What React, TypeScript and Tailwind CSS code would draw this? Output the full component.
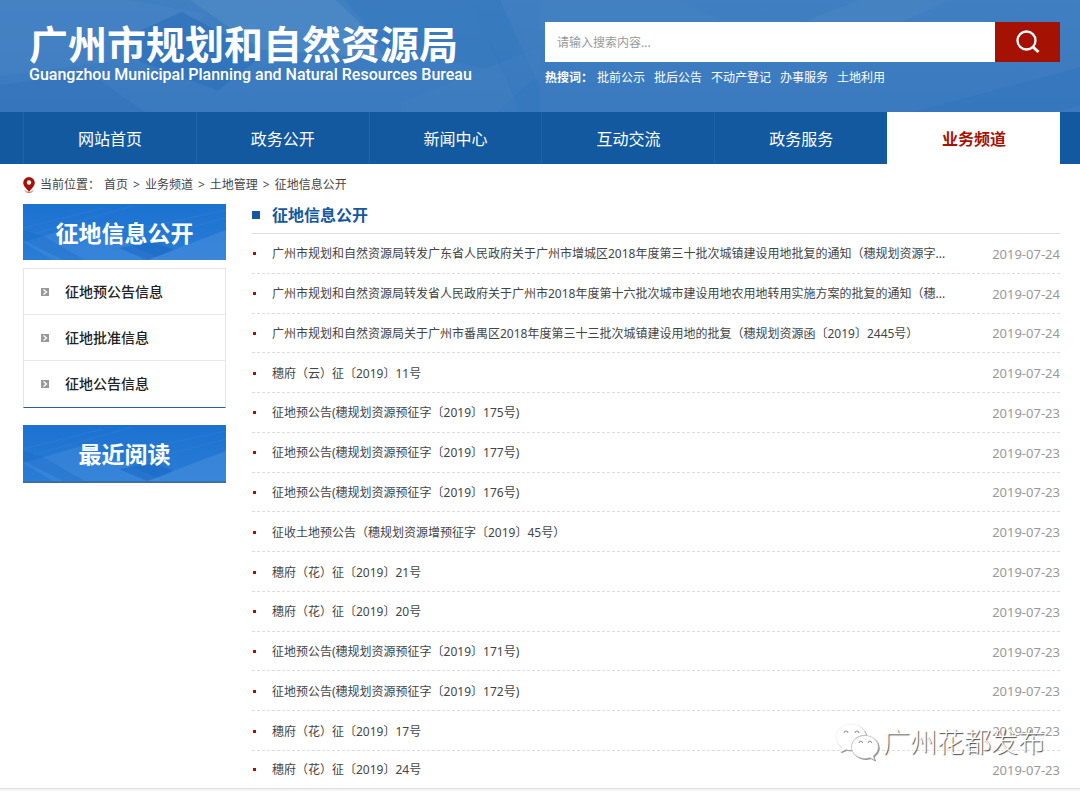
const navItems = ["网站首页", "政务公开", "新闻中心", "互动交流", "政务服务", "业务频道"]

const hotWords = ["批前公示", "批后公告", "不动产登记", "办事服务", "土地利用"]

const crumbs = ["首页", "业务频道", "土地管理", "征地信息公开"]

const menuItems = ["征地预公告信息", "征地批准信息", "征地公告信息"]

const articles = [
    { title: "广州市规划和自然资源局转发广东省人民政府关于广州市增城区2018年度第三十批次城镇建设用地批复的通知（穗规划资源字...", date: "2019-07-24" },
    { title: "广州市规划和自然资源局转发省人民政府关于广州市2018年度第十六批次城市建设用地农用地转用实施方案的批复的通知（穗...", date: "2019-07-24" },
    { title: "广州市规划和自然资源局关于广州市番禺区2018年度第三十三批次城镇建设用地的批复（穗规划资源函〔2019〕2445号）", date: "2019-07-24" },
    { title: "穗府（云）征〔2019〕11号", date: "2019-07-24" },
    { title: "征地预公告(穗规划资源预征字〔2019〕175号)", date: "2019-07-23" },
    { title: "征地预公告(穗规划资源预征字〔2019〕177号)", date: "2019-07-23" },
    { title: "征地预公告(穗规划资源预征字〔2019〕176号)", date: "2019-07-23" },
    { title: "征收土地预公告（穗规划资源增预征字〔2019〕45号）", date: "2019-07-23" },
    { title: "穗府（花）征〔2019〕21号", date: "2019-07-23" },
    { title: "穗府（花）征〔2019〕20号", date: "2019-07-23" },
    { title: "征地预公告(穗规划资源预征字〔2019〕171号)", date: "2019-07-23" },
    { title: "征地预公告(穗规划资源预征字〔2019〕172号)", date: "2019-07-23" },
    { title: "穗府（花）征〔2019〕17号", date: "2019-07-23" },
    { title: "穗府（花）征〔2019〕24号", date: "2019-07-23" },
]

const HeaderPattern = () => (
    <svg className="absolute inset-0 w-full h-full" viewBox="0 0 1080 112" preserveAspectRatio="none" aria-hidden="true">
        <defs>
            <linearGradient id="sky" x1="0" y1="0" x2="0" y2="1">
                <stop offset="0" stopColor="#407fc1" />
                <stop offset="1" stopColor="#3777bd" />
            </linearGradient>
        </defs>
        <rect width="1080" height="112" fill="url(#sky)" />
        <polygon points="0,0 130,0 210,10 110,42 0,52" fill="#4a88c7" opacity="0.4" />
        <polygon points="130,24 182,8 262,38 218,62 140,42" fill="#2c6fba" opacity="0.6" />
        <path d="M190 0H335Q368 18 384 40L262 34Z" fill="#5590c9" opacity="0.5" />
        <polygon points="0,58 90,50 210,108 150,112 0,112" fill="#326fb8" opacity="0.4" />
        <polygon points="90,84 140,82 214,104 165,110" fill="#2c6bb4" opacity="0.5" />
        <polygon points="345,0 470,0 505,50 440,40 390,36" fill="#3377bd" opacity="0.5" />
        <polygon points="470,0 500,0 540,60 540,112 510,60" fill="#2f75bc" opacity="0.4" />
        <polygon points="400,70 540,32 540,50 440,112 410,112" fill="#4582c3" opacity="0.3" />
        <polygon points="540,0 680,0 720,14 610,30 540,20" fill="#4482c1" opacity="0.5" />
        <polygon points="805,14 860,0 950,0 880,22" fill="#4986c4" opacity="0.5" />
        <polygon points="720,112 1080,46 1080,72 860,112" fill="#2f72bb" opacity="0.4" />
    </svg>
)

const SideTitle = ({ id, text }: { id: string; text: string }) => (
    <div className="relative flex h-14 items-center justify-center overflow-hidden">
        <svg className="absolute inset-0 w-full h-full" viewBox="0 0 203 56" preserveAspectRatio="none" aria-hidden="true">
            <defs>
                <linearGradient id={id} x1="0" y1="0" x2="0" y2="1">
                    <stop offset="0" stopColor="#1c72d0" />
                    <stop offset="1" stopColor="#2a7dd6" />
                </linearGradient>
            </defs>
            <rect width="203" height="56" fill={`url(#${id})`} />
            <polygon points="0,38 62,20 140,56 30,56" fill="#4a92de" opacity="0.4" />
            <polygon points="0,26 20,32 62,56 40,56 0,36" fill="#1467c2" opacity="0.3" />
            <polygon points="96,44 130,38 152,46 124,56" fill="#1564bf" opacity="0.5" />
            <polygon points="150,46 203,26 203,56 126,56" fill="#4990dd" opacity="0.5" />
            <path d="M0 24L80 4M10 30L110 2M90 30L203 6M120 36L203 14" stroke="#4289d8" strokeWidth="1" opacity="0.3" />
        </svg>
        <h2 className="relative pt-0.5 text-[23px] leading-7 font-bold text-white">{text}</h2>
    </div>
)

const Watermark = () => (
    <div className="pointer-events-none absolute right-[35px] bottom-[29px] flex items-center gap-1">
        <svg className="h-10 w-11 drop-shadow-[1px_1px_0px_#888]" viewBox="0 0 44 40" aria-hidden="true">
            <path d="M16 2C7.500 2 1 8 1 15c0 4.500 2.500 8 6 10.500L5.500 30l5.500-2.500c2 .5 4 .8 6 .5C15 19 22 12.500 31 13 29.500 6.500 23.500 2 16 2z" fill="#fff" stroke="#e4e4e4" strokeWidth="0.5" />
            <path d="M30 13.500c-7.500 0-13.500 5-13.500 11.500S22.500 36.500 30 36.500c1.800 0 3.400-.3 5-.8l4.500 2.300-1.200-4c3-2.200 5-5.200 5-9 0-6.500-6-11.500-13.300-11.500z" fill="#fff" stroke="#bbb" strokeWidth="0.700" />
            <path d="M9 11a2 2 0 0 1 4 0M20 11a2 2 0 0 1 4 0M24 21a1.800 1.800 0 0 1 3.600 0M33 21a1.800 1.800 0 0 1 3.600 0" fill="none" stroke="#888" strokeWidth="1" />
        </svg>
        <span className="text-[27px] leading-9 font-light text-white [text-shadow:1px_1px_1px_#444]">广州花都发布</span>
    </div>
)

const App = () => {
    return (
        <div className="relative bg-white text-xs text-[#444] font-['Noto_Sans','Noto_Sans_CJK_SC',sans-serif]">
            <header className="relative bg-[#3b7bbf]">
                <HeaderPattern />
                <div className="relative flex h-28 justify-between pl-[29px] pr-5 text-white">
                    <div className="pt-[22px]">
                        <h1 className="text-[39px] leading-[44px] font-bold">广州市规划和自然资源局</h1>
                        <p className="font-[Roboto,sans-serif] text-base leading-[18px] font-medium">
                            Guangzhou Municipal Planning and Natural Resources Bureau
                        </p>
                    </div>
                    <div className="w-[515px] pt-[22px]">
                        <form className="flex h-10" onSubmit={(e) => e.preventDefault()}>
                            <input
                                type="text"
                                aria-label="搜索"
                                placeholder="请输入搜索内容..."
                                className="min-w-0 flex-1 bg-white px-3 pt-px text-xs text-[#444] outline-none placeholder:text-[#999]"
                            />
                            <button type="submit" aria-label="搜索" className="flex w-[65px] items-center justify-center bg-[#a51203]">
                                <svg className="h-7 w-7" viewBox="0 0 28 28" fill="none" stroke="#fff" strokeWidth="2.300">
                                    <circle cx="12.500" cy="12.500" r="9" />
                                    <path d="M19 19l5.500 5" strokeWidth="3" />
                                </svg>
                            </button>
                        </form>
                        <p className="mt-1 flex leading-6">
                            <strong className="mr-1">热搜词：</strong>
                            <span className="flex gap-[9px]">
                                {hotWords.map((word) => (
                                    <a key={word} href="#">{word}</a>
                                ))}
                            </span>
                        </p>
                    </div>
                </div>
                <nav className="relative flex h-[52px] bg-[#12599f] pl-[23px] pr-5">
                    {navItems.map((item) => (
                        <a
                            key={item}
                            href="#"
                            className={
                                item === "业务频道"
                                    ? "flex flex-1 items-center justify-center border-l border-white bg-white pt-0.5 text-base font-bold text-[#a51203]"
                                    : "flex flex-1 items-center justify-center border-l border-[#1a66a9] pt-0.5 text-base text-white"
                            }
                        >
                            {item}
                        </a>
                    ))}
                </nav>
            </header>

            <div className="flex h-10 items-center pl-[23px] pt-px">
                <svg className="mr-[5px] h-4 w-3" viewBox="0 0 12 16" aria-hidden="true">
                    <path d="M6 0a5.800 5.800 0 0 0-5.800 5.800C.2 9.500 4 12 6 15c2-3 5.800-5.500 5.800-9.200A5.800 5.800 0 0 0 6 0z" fill="#a51203" />
                    <circle cx="6" cy="5.500" r="2.200" fill="#fff" />
                    <path d="M2 13.500c1 2.500 7 2.500 8 0" fill="none" stroke="#c4554a" strokeWidth="1" />
                </svg>
                <span className="mr-1">当前位置：</span>
                {crumbs.map((crumb, i) => (
                    <span key={crumb}>
                        {i > 0 && <span className="px-[5px]">&gt;</span>}
                        <a href="#">{crumb}</a>
                    </span>
                ))}
            </div>

            <div className="flex gap-[26px] pl-[23px] pr-5">
                <aside className="w-[203px] shrink-0">
                    <SideTitle id="side-a" text="征地信息公开" />
                    <ul className="mt-2 border border-[#e6e6e6] border-b-[#2a5f9e]">
                        {menuItems.map((item) => (
                            <li key={item} className="h-[46px] border-b border-[#e8e8e8] last:border-b-0">
                                <a href="#" className="flex h-full items-center pl-[17px] text-sm font-medium text-[#222]">
                                    <svg className="mr-4 h-2 w-2" viewBox="0 0 8 8" aria-hidden="true">
                                        <rect width="8" height="8" fill="#999" />
                                        <path d="M2.500 1.500L5.500 4l-3 2.500" fill="none" stroke="#fff" strokeWidth="1.300" />
                                    </svg>
                                    {item}
                                </a>
                            </li>
                        ))}
                    </ul>
                    <div className="mt-[17px] border-b-2 border-[#3a6fa8]">
                        <SideTitle id="side-b" text="最近阅读" />
                    </div>
                </aside>

                <main className="min-w-0 flex-1">
                    <div className="flex h-[30px] items-center border-b border-[#ddd] pb-[7px]">
                        <span className="mr-3 h-2 w-2 bg-[#15579f]" />
                        <h2 className="text-base leading-5 font-bold text-[#15579f]">征地信息公开</h2>
                    </div>
                    <ul className="flex min-h-[554px] flex-col">
                        {articles.map((article) => (
                            <li
                                key={article.title}
                                className="flex flex-1 items-center border-b border-dashed border-[#ddd] pt-px last:h-[37px] last:flex-none last:border-b-0"
                            >
                                <span className="mr-4 ml-px h-[3px] w-[3px] shrink-0 bg-[#a51203]" />
                                <a href="#" className="min-w-0 flex-1 truncate pt-px leading-5">{article.title}</a>
                                <time className="ml-4 text-[13px] leading-5 text-[#999]">{article.date}</time>
                            </li>
                        ))}
                    </ul>
                </main>
            </div>

            <footer className="h-[3px] border-t border-[#ddd] bg-[#f5f5f5]" />
            <Watermark />
        </div>
    )
}

export default App
